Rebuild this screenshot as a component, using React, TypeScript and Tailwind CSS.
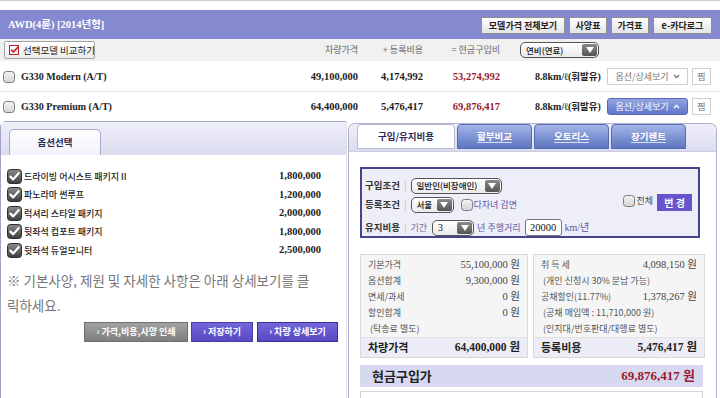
import React from "react";

const SERIF = "font-['Liberation_Serif','Noto_Sans_CJK_KR',serif]";

const models = [
  { name: "G330 Modern (A/T)", price: "49,100,000", reg: "4,174,992", total: "53,274,992", open: false },
  { name: "G330 Premium (A/T)", price: "64,400,000", reg: "5,476,417", total: "69,876,417", open: true },
];

const options = [
  ["드라이빙 어시스트 패키지Ⅱ", "1,800,000"],
  ["파노라마 썬루프", "1,200,000"],
  ["럭셔리 스타일 패키지", "2,000,000"],
  ["뒷좌석 컴포트 패키지", "1,800,000"],
  ["뒷좌석 듀얼모니터", "2,500,000"],
];

const carRows = [
  ["기본가격", "55,100,000 원"],
  ["옵션합계", "9,300,000 원"],
  ["면세/과세", "0 원"],
  ["할인합계", "0 원"],
  [" (탁송료 별도)", ""],
];

const regRows = [
  ["취 득 세", "4,098,150 원"],
  [" (개인 신청시 30% 분납 가능)", ""],
  ["공채할인(11.77%)", "1,378,267 원"],
  [" (공채 매입액 : 11,710,000 원)", ""],
  [" (인지대/번호판대/대행료 별도)", ""],
];

function Box({ checked }: { checked?: boolean }) {
  if (checked)
    return (
      <svg width="15" height="15" viewBox="0 0 15 15" className="shrink-0">
        <defs>
          <linearGradient id="cbk" x1="0" y1="0" x2="0" y2="1">
            <stop offset="0" stopColor="#8c8c8c" />
            <stop offset="1" stopColor="#3c3c3c" />
          </linearGradient>
        </defs>
        <rect x="0.5" y="0.5" width="14" height="14" rx="3" fill="url(#cbk)" stroke="#2e2e2e" />
        <path d="M3.4 7.6 L6.2 10.4 L11.6 4.2" stroke="#fff" strokeWidth="2.2" fill="none" strokeLinecap="round" strokeLinejoin="round" />
      </svg>
    );
  return (
    <svg width="12" height="12" viewBox="0 0 12 12" className="shrink-0">
      <defs>
        <linearGradient id="cbu" x1="0" y1="0" x2="0" y2="1">
          <stop offset="0" stopColor="#f4f4f4" />
          <stop offset="1" stopColor="#d4d4d4" />
        </linearGradient>
      </defs>
      <rect x="0.5" y="0.5" width="11" height="11" rx="3" fill="url(#cbu)" stroke="#7a7a7a" />
    </svg>
  );
}

function Select({ label, className, serif }: { label: string; className: string; serif?: boolean }) {
  return (
    <div className={`flex h-[16px] items-center justify-between rounded-[5px] border border-[#555] bg-gradient-to-b from-white to-[#ebebeb] pl-[5px] pr-[1px] ${className}`}>
      <span className={`leading-none text-[#111] ${serif ? `${SERIF} text-[10px]` : "text-[8.5px] font-medium"}`}>{label}</span>
      <span className="flex h-[12px] w-[15px] shrink-0 items-center justify-center rounded-[2px] bg-gradient-to-b from-[#8a8a8a] to-[#555]">
        <svg width="8" height="6" viewBox="0 0 8 6">
          <path d="M0 0H8L4 6Z" fill="#fff" />
        </svg>
      </span>
    </div>
  );
}

function Chevron({ up, color }: { up?: boolean; color: string }) {
  return (
    <svg width="7" height="5" viewBox="0 0 7 5" className="ml-[4px] shrink-0">
      <path d={up ? "M1 4L3.5 1.5L6 4" : "M1 1L3.5 3.5L6 1"} stroke={color} strokeWidth="1.3" fill="none" />
    </svg>
  );
}

function InfoBox({ rows, label, value }: { rows: string[][]; label: string; value: string }) {
  return (
    <div className="flex flex-col border border-[#d8d8d8] bg-[#f5f5f5] pt-[2px]">
      {rows.map(([l, v]) => (
        <div key={l} className="flex h-[16px] items-center justify-between px-[7px] text-[9px] text-[#555]">
          <span className="whitespace-pre">{l}</span>
          <span className={`${SERIF} text-[10.5px] text-[#444]`}>{v}</span>
        </div>
      ))}
      <div className="flex h-[20px] items-center justify-between border-t border-[#e2e2e2] bg-[#ededf7] px-[7px]">
        <span className="text-[11px] font-bold text-[#222]">{label}</span>
        <span className={`${SERIF} text-[11.5px] font-bold text-[#222]`}>{value}</span>
      </div>
    </div>
  );
}

export default function App() {
  return (
    <div className="h-[398px] w-[720px] overflow-hidden whitespace-nowrap bg-white font-['Noto_Sans_CJK_KR',sans-serif] text-[9px] text-[#333]">
      <div className="h-[10px] border-t border-[#cfcfcf]" />

      <div className="flex h-[29px] items-center justify-between bg-[#8589d0] px-[8px]">
        <span className={`${SERIF} text-[10.5px] font-bold text-white`}>AWD(4륜) [2014년형]</span>
        <div className="mt-[2px] flex gap-[4px]">
          {[
            ["모델가격 전체보기", "w-[84px]"],
            ["사양표", "w-[38px]"],
            ["가격표", "w-[38px]"],
            ["e-카다로그", "w-[59px]"],
          ].map(([t, w]) => (
            <div key={t} className={`flex h-[17px] items-center justify-center border border-[#8f8f8f] bg-gradient-to-b from-white to-[#e4e4e4] text-[9px] font-bold text-[#222] ${w}`}>
              {t}
            </div>
          ))}
        </div>
      </div>

      <div className="grid h-[22px] grid-cols-[300px_58px_65px_77px_105px_85px_30px] items-center bg-[#f1f1f1] text-[9px] text-[#666]">
        <div className="ml-[4px] flex h-[18px] w-[91px] items-center gap-[3px] rounded-[2px] border border-[#a4a4a4] bg-gradient-to-b from-white to-[#ececec] px-[4px] text-[9.5px] text-[#222]">
          <svg width="11" height="10" viewBox="0 0 11 10" className="shrink-0">
            <rect x="0.5" y="0.5" width="9" height="9" fill="none" stroke="#c0242c" />
            <path d="M2.2 4.6L4.4 6.8L9.6 1.6" stroke="#c0242c" strokeWidth="1.6" fill="none" />
          </svg>
          선택모델 비교하기
        </div>
        <div className="text-right">차량가격</div>
        <div className="text-right">+ 등록비용</div>
        <div className="text-right">= 현금구입비</div>
        <div className="pl-[20px]">
          <Select label="연비(연료)" className="w-[79px]" />
        </div>
        <div />
        <div />
      </div>

      {models.map((m, i) => (
        <div
          key={m.name}
          className={`grid grid-cols-[300px_58px_65px_77px_105px_85px_30px] items-center ${i === 0 ? "mt-[1px] h-[30px] border-b border-[#e4e4e4]" : "h-[29px]"}`}
        >
          <div className="flex items-center gap-[6px] pl-[3px]">
            <Box />
            <span className={`${SERIF} text-[10px] font-bold text-[#222]`}>{m.name}</span>
          </div>
          <div className={`${SERIF} text-right text-[10.5px] font-bold text-[#222]`}>{m.price}</div>
          <div className={`${SERIF} text-right text-[10.5px] font-bold text-[#222]`}>{m.reg}</div>
          <div className={`${SERIF} text-right text-[10.5px] font-bold text-[#9b1b2a]`}>{m.total}</div>
          <div className={`${SERIF} pl-[35px] text-[10px] font-bold text-[#222]`}>
            8.8km/ℓ(<span className="text-[9.5px]">휘발유</span>)
          </div>
          <div className="pl-[2px]">
            {m.open ? (
              <div className="flex h-[17px] w-[81px] items-center justify-center rounded-[3px] border border-[#5668b8] bg-gradient-to-b from-[#93a3e2] to-[#6275c8] text-[9px] text-white">
                옵션/상세보기
                <Chevron up color="#fff" />
              </div>
            ) : (
              <div className="flex h-[17px] w-[81px] items-center justify-center border border-[#cfcfcf] bg-white text-[9px] text-[#777]">
                옵션/상세보기
                <Chevron color="#777" />
              </div>
            )}
          </div>
          <div className="pl-[2px]">
            <div className="flex h-[17px] w-[19px] items-center justify-center border border-[#cfcfcf] bg-white text-[9px] text-[#777]">찜</div>
          </div>
        </div>
      ))}

      <div className="flex h-[277px]">
        <div className="flex w-[347px] flex-col rounded-tl-[6px] border-l border-t border-r border-l-[#9fa3c6] border-t-[#9fa3c6] border-r-[#dedede]">
          <div className="flex h-[33px] items-end bg-gradient-to-b from-[#efeff9] to-[#dcdcf0] pl-[8px]">
            <div className="flex h-[26px] w-[92px] items-center justify-center rounded-t-[5px] border border-b-0 border-[#a9acd0] bg-gradient-to-b from-white to-[#f1f1fa] text-[9.5px] font-bold text-[#2a2a55]">
              옵션선택
            </div>
          </div>
          <div className="flex flex-1 flex-col pl-[6px] pr-[7px] pt-[12px]">
            {options.map(([n, p]) => (
              <div key={n} className="flex h-[18.5px] items-center">
                <Box checked />
                <span className="ml-[2px] flex-1 text-[9px] font-medium text-[#222]">{n}</span>
                <span className={`${SERIF} w-[80px] pr-[18px] text-right text-[10.5px] font-bold text-[#222]`}>{p}</span>
              </div>
            ))}
            <p className="mt-[8px] text-[13.5px] leading-[25px] text-[#777]">
              ※ 기본사양, 제원 및 자세한 사항은 아래 상세보기를 클<br />
              릭하세요.
            </p>
            <div className="mt-[4px] flex justify-end gap-[3px] pr-[1px]">
              <div className="flex h-[20px] w-[104px] items-center justify-center border border-[#6f6f6f] bg-gradient-to-b from-[#a2a2a2] to-[#7f7f7f] text-[9px] font-bold text-white">
                › 가격,비용,사양 인쇄
              </div>
              <div className="flex h-[20px] w-[62px] items-center justify-center border border-[#4a3da8] bg-gradient-to-b from-[#7466da] to-[#5848c4] text-[9px] font-bold text-white">
                › 저장하기
              </div>
              <div className="ml-[1px] flex h-[20px] w-[81px] items-center justify-center border border-[#3b2f96] bg-gradient-to-b from-[#7466da] to-[#5848c4] text-[9px] font-bold text-white">
                › 차량 상세보기
              </div>
            </div>
          </div>
        </div>

        <div className="ml-[1px] mr-[3px] mt-[2px] flex flex-1 flex-col rounded-t-[7px] border border-b-0 border-[#aeb1cc]">
          <div className="flex h-[33px] items-end gap-[2px] rounded-t-[7px] border-b border-[#c9cbe3] bg-gradient-to-b from-[#efeff9] to-[#dcdcf0] pl-[8px]">
            <div className="mb-[2px] flex h-[25px] w-[98px] items-center justify-center rounded-t-[4px] border border-[#b8bbd6] bg-white text-[9.5px] font-bold text-[#2a2a55]">
              구입/유지비용
            </div>
            {["할부비교", "오토리스", "장기렌트"].map((t) => (
              <div key={t} className="mb-[2px] flex h-[25px] w-[75px] items-center justify-center rounded-t-[4px] border border-[#566cb2] bg-gradient-to-b from-[#a3b5e8] to-[#5f76c0] text-[9.5px] font-bold text-white underline decoration-[#d8def5] underline-offset-2">
                {t}
              </div>
            ))}
          </div>

          <div className="flex flex-1 flex-col px-[11px] pt-[15px]">
            <div className="flex h-[71px] w-[340px] items-center justify-between border-2 border-[#45458f] bg-[#eeeef9] pr-[6px]">
              <div className="flex h-full flex-col pl-[3px] pt-[8px] text-[9.5px]">
                <div className="flex h-[17px] items-center">
                  <span className="font-bold text-[#333]">구입조건</span>
                  <span className="mx-[4px] text-[#bbb]">|</span>
                  <Select label="일반인(비장애인)" className="w-[91px]" />
                </div>
                <div className="mt-[2px] flex h-[17px] items-center">
                  <span className="font-bold text-[#333]">등록조건</span>
                  <span className="mx-[4px] text-[#bbb]">|</span>
                  <Select label="서울" className="w-[43px]" />
                  <span className="ml-[7px]"><Box /></span>
                  <span className="ml-[1px] text-[9px] text-[#5a5aa6]">다자녀 감면</span>
                </div>
                <div className="mt-[6px] flex h-[17px] items-center">
                  <span className="font-bold text-[#333]">유지비용</span>
                  <span className="mx-[4px] text-[#bbb]">|</span>
                  <span className="text-[9px] text-[#6a6aa8]">기간</span>
                  <Select label="3" serif className="ml-[5px] w-[42px]" />
                  <span className="ml-[3px] text-[9px] text-[#5a5aa6]">년 주행거리</span>
                  <div className={`${SERIF} ml-[4px] flex h-[17px] w-[37px] items-center justify-center rounded-[3px] border border-[#777] bg-white text-[10.5px] text-[#111]`}>
                    20000
                  </div>
                  <span className={`${SERIF} ml-[3px] text-[10px] text-[#5a5aa6]`}>km/년</span>
                </div>
              </div>
              <div className="flex items-center">
                <span className="-mt-[4px]"><Box /></span>
                <span className="-mt-[4px] ml-[1px] text-[9px] text-[#444]">전체</span>
                <div className="ml-[4px] flex h-[17px] w-[35px] items-center justify-center bg-[#6655cc] text-[10px] font-bold text-white">
                  변 경
                </div>
              </div>
            </div>

            <div className="mt-[16px] grid grid-cols-[168px_172px] gap-[5px]">
              <InfoBox rows={carRows} label="차량가격" value="64,400,000 원" />
              <InfoBox rows={regRows} label="등록비용" value="5,476,417 원" />
            </div>

            <div className="mt-[7px] flex h-[22px] w-[343px] items-center justify-between bg-[#d7d9f1] pl-[12px] pr-[8px]">
              <span className="text-[13px] font-bold text-[#222]">현금구입가</span>
              <span className={`${SERIF} text-[13px] font-bold text-[#9b1b2a]`}>69,876,417 원</span>
            </div>
            <div className="mt-[4px] h-[10px] w-[343px] border border-b-0 border-[#d4d4d4]" />
          </div>
        </div>
      </div>
    </div>
  );
}
